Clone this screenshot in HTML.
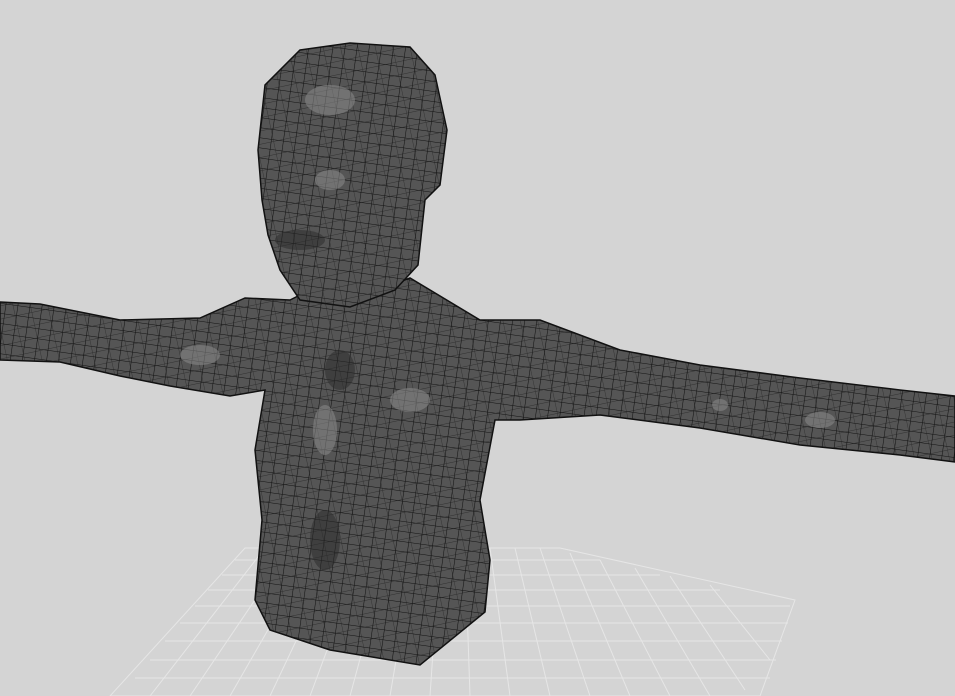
<!DOCTYPE html>
<html><head><meta charset="utf-8"><style>html,body{margin:0;padding:0;background:#d4d4d4;width:955px;height:696px;overflow:hidden}</style></head>
<body>
<svg width="955" height="696" viewBox="0 0 955 696" xmlns="http://www.w3.org/2000/svg">
<defs>
<pattern id="mesh" width="12" height="10" patternUnits="userSpaceOnUse" patternTransform="rotate(8)">
<rect width="12" height="10" fill="#555"/>
<path d="M0 0H12M0 0V10" stroke="#121212" stroke-width="1.1"/>
</pattern>
<pattern id="mesh2" width="17" height="13" patternUnits="userSpaceOnUse" patternTransform="rotate(-12)">
<path d="M0 0H17M0 0V13" stroke="#181818" stroke-width="0.9" fill="none"/>
</pattern>
<clipPath id="bodyclip">
<path d="M0 302 L40 304 L120 320 L200 318 L245 298 L290 300 L310 290 L350 300 L410 278 L480 320 L540 320 L620 350 L700 365 L800 378 L900 390 L955 396 L955 462 L900 455 L800 445 L700 428 L600 415 L520 420 L495 420 L480 500 L490 560 L485 612 L420 665 L330 650 L270 630 L255 600 L262 520 L255 450 L265 390 L230 396 L170 386 L120 376 L60 362 L0 360 Z"/>
<path d="M300 50 L350 43 L410 47 L435 75 L447 130 L440 185 L425 200 L418 265 L395 290 L350 307 L300 300 L280 270 L268 235 L262 200 L258 150 L265 85 Z"/>
</clipPath>
</defs>
<rect width="955" height="696" fill="#d4d4d4"/>
<g stroke="#e6e6e6" stroke-width="1" fill="none">
<path d="M245 548 L560 548 L795 600 L760 696 L110 696 Z"/>
<path d="M235 560H600M222 575H660M208 590H720M195 606H790M180 623H788M165 641H782M150 660H776M135 678H770"/>
<path d="M265 548 L150 696M290 548 L190 696M315 548 L230 696M340 548 L270 696M365 548 L310 696M390 548 L350 696M415 548 L390 696M440 548 L430 696M465 548 L470 696M490 548 L510 696M515 548 L550 696M540 548 L590 696M570 553 L630 696M600 560 L670 696M635 568 L710 696M670 576 L745 690M710 585 L770 660"/>
</g>
<g stroke="#111" stroke-width="1.5">
<path fill="url(#mesh)" d="M0 302 L40 304 L120 320 L200 318 L245 298 L290 300 L310 290 L350 300 L410 278 L480 320 L540 320 L620 350 L700 365 L800 378 L900 390 L955 396 L955 462 L900 455 L800 445 L700 428 L600 415 L520 420 L495 420 L480 500 L490 560 L485 612 L420 665 L330 650 L270 630 L255 600 L262 520 L255 450 L265 390 L230 396 L170 386 L120 376 L60 362 L0 360 Z"/>
<path fill="url(#mesh)" d="M300 50 L350 43 L410 47 L435 75 L447 130 L440 185 L425 200 L418 265 L395 290 L350 307 L300 300 L280 270 L268 235 L262 200 L258 150 L265 85 Z"/>
</g>
<g clip-path="url(#bodyclip)">
<rect width="955" height="696" fill="url(#mesh2)" opacity="0.6"/>
<g fill="#8a8a8a" opacity="0.55">
<ellipse cx="330" cy="100" rx="25" ry="15"/>
<ellipse cx="330" cy="180" rx="15" ry="10"/>
<ellipse cx="325" cy="430" rx="12" ry="25"/>
<ellipse cx="410" cy="400" rx="20" ry="12"/>
<ellipse cx="820" cy="420" rx="15" ry="8"/>
<ellipse cx="720" cy="405" rx="8" ry="6"/>
<ellipse cx="200" cy="355" rx="20" ry="10"/>
</g>
<g fill="#2a2a2a" opacity="0.5">
<ellipse cx="300" cy="240" rx="25" ry="10"/>
<ellipse cx="340" cy="370" rx="15" ry="20"/>
<ellipse cx="325" cy="540" rx="15" ry="30"/>
</g>
</g>
</svg>
</body></html>
